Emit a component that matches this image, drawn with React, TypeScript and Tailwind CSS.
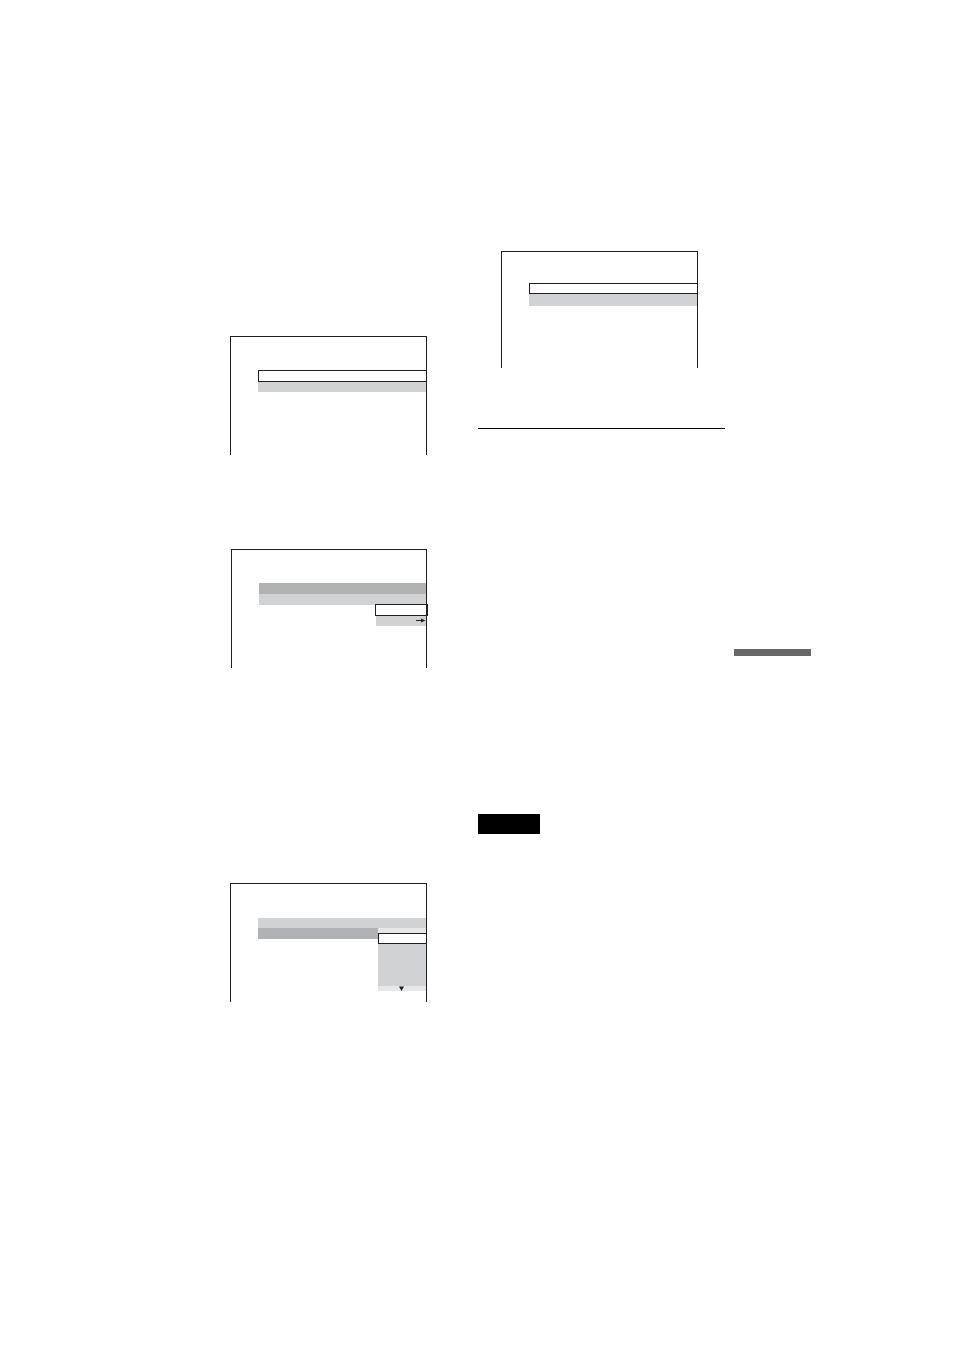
import type { ReactNode } from "react";
import clsx from "clsx";

interface ScreenProps {
  className?: string;
  children: ReactNode;
}

// Screen outline, open at the bottom
function Screen({ className, children }: ScreenProps) {
  return (
    <figure className={clsx("mr-[27px] border border-b-0 border-[#231f20]", className)}>
      {children}
    </figure>
  );
}

// Highlighted row, open on the side that meets the screen edge
function SelectedRow({ className }: { className?: string }) {
  return <li className={clsx("border border-r-0 border-[#231f20] bg-white", className)} />;
}

function ArrowRight() {
  return (
    <svg width="10" height="6" viewBox="0 0 10 6" fill="#231f20" aria-hidden="true">
      <path d="M0 2h5V0.5L9.5 2.5 5 4.5V3H0z" />
    </svg>
  );
}

function ArrowDown() {
  return (
    <svg width="6" height="5" viewBox="0 0 6 5" fill="#231f20" aria-hidden="true">
      <path d="M0 0.5h5L2.5 5z" />
    </svg>
  );
}

export default function App() {
  return (
    <div className="flex min-h-screen items-start gap-[9px] bg-white pr-[143px] pl-[207px]">
      <main className="grid flex-1 grid-cols-2 gap-x-6">
        {/* Left column */}
        <section className="pt-[336px]">
          <Screen className="ml-[23px] h-[119px] pt-[33px]">
            <ul className="ml-[27px]">
              <SelectedRow className="h-3" />
              <li className="h-[10px] bg-[#d1d2d4]" />
            </ul>
          </Screen>

          <Screen className="mt-[94px] ml-6 h-[119px] pt-[33px]">
            <div className="relative ml-[27px]">
              <ul>
                <li className="h-[11px] bg-[#b1b2b4]" />
                <li className="h-[11px] bg-[#d1d2d4]" />
              </ul>
              {/* Submenu */}
              <ul className="absolute top-[21px] -right-[2px] w-[53px]">
                <li className="h-3 border border-r-2 border-[#231f20] bg-white" />
                <li className="mr-[2px] ml-px flex h-[10px] items-center justify-end bg-[#d1d2d4]">
                  <ArrowRight />
                </li>
              </ul>
            </div>
          </Screen>

          <Screen className="mt-[215px] ml-[23px] h-[119px] pt-[34px]">
            <div className="relative ml-[27px]">
              <ul>
                <li className="h-[10px] bg-[#d1d2d4]" />
                <li className="h-[11px] bg-[#b1b2b4]" />
              </ul>
              {/* Scrolling list */}
              <ul className="absolute top-[10px] right-0 w-12">
                <li className="h-[5px] bg-[#e6e7e8]" />
                <SelectedRow className="h-[11px]" />
                <li className="h-[42px] bg-[#d1d2d4]" />
                <li className="flex h-[5px] justify-center bg-[#e6e7e8]">
                  <ArrowDown />
                </li>
              </ul>
            </div>
          </Screen>
        </section>

        {/* Right column */}
        <section className="pt-[251px]">
          <Screen className="ml-[23px] h-[117px] pt-[31px]">
            <ul className="ml-[27px]">
              <SelectedRow className="h-[11px]" />
              <li className="h-3 bg-[#d1d2d4]" />
            </ul>
          </Screen>
          <hr className="mt-[60px] border-t border-black" />
          <div className="mt-[385px] h-5 w-[62px] bg-black" />
        </section>
      </main>

      {/* Section marker at the page edge */}
      <aside className="mt-[649px] h-[7px] w-[77px] bg-[#676767]" />
    </div>
  );
}
